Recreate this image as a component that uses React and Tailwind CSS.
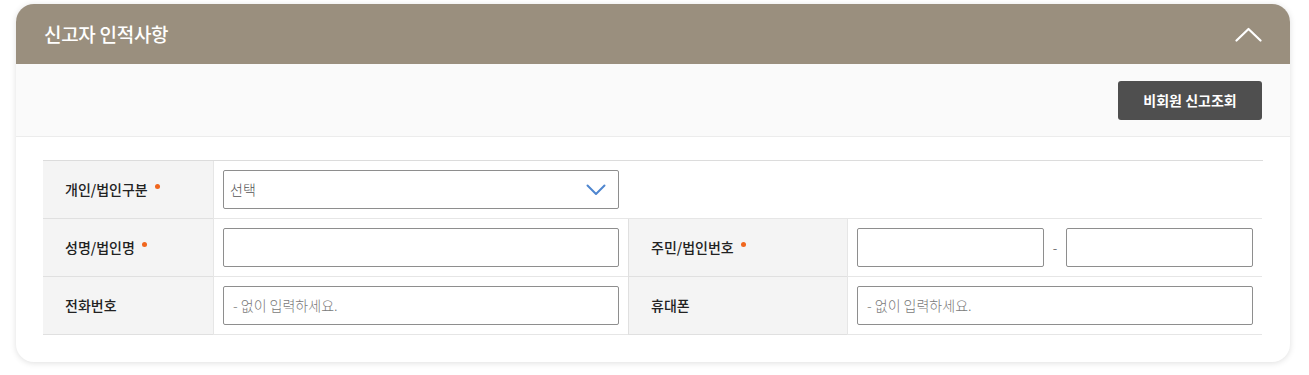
import React from "react";

const font = { fontFamily: '"Noto Sans CJK KR", "Noto Sans", sans-serif' };

function Dot() {
  return <span className="inline-block w-[5px] h-[5px] rounded-full bg-[#f0661e] ml-[7px] relative top-[-3px]"></span>;
}

function Label({ children, req, first }) {
  return (
    <div className={"bg-[#f4f4f4] flex items-center pl-[22px] text-[14px] font-medium text-[#222] border-b border-[#e0e0e0] " + (first ? "" : "border-l")}>
      <span>{children}</span>
      {req && <Dot />}
    </div>
  );
}

function Input({ placeholder, className = "" }) {
  return (
    <div className={"h-[39px] border border-[#8e8e8e] rounded-[2px] bg-white flex items-center px-[9px] text-[14px] font-light text-[#7a7a7a] " + className}>
      {placeholder}
    </div>
  );
}

export default function App() {
  return (
    <div className="bg-white w-[1309px] h-[375px] pt-[4px] px-[16px]" style={font}>
      <div className="w-[1274px] h-[358px] rounded-[18px] overflow-hidden bg-white shadow-[0_1px_6px_rgba(0,0,0,0.13)] flex flex-col">
        <div className="h-[60px] bg-[#9a8f7e] flex items-center justify-between pl-[28px] pr-[28px]">
          <span className="text-white text-[19px] font-medium tracking-[-0.3px]">신고자 인적사항</span>
          <svg width="27" height="15" viewBox="0 0 27 15" fill="none">
            <path d="M1.5 13.5 L13.5 2 L25.5 13.5" stroke="white" strokeWidth="2.2" strokeLinecap="round" strokeLinejoin="round" />
          </svg>
        </div>
        <div className="h-[73px] bg-[#fafafa] border-b border-[#ececec] flex items-start justify-end pr-[28px] pt-[17px]">
          <button className="w-[144px] h-[39px] bg-[#4f4f4f] text-white text-[14px] font-bold rounded-[3px]">비회원 신고조회</button>
        </div>
        <div className="px-[27px] pt-[23px]">
          <div className="border-t border-[#dcdcdc] grid grid-cols-[170px_415px_219px_415px] grid-rows-[58px_58px_58px]">
            <Label req first>개인/법인구분</Label>
            <div className="col-span-3 flex items-center pl-[9px] border-l border-b border-[#e6e6e6]">
              <div className="w-[396px] h-[39px] border border-[#8e8e8e] rounded-[2px] bg-white flex items-center justify-between pl-[6px] pr-[12px] text-[14px] font-light text-[#555]">
                <span>선택</span>
                <svg width="20" height="12" viewBox="0 0 20 12" fill="none">
                  <path d="M1.5 1.5 L10 10 L18.5 1.5" stroke="#4f86cf" strokeWidth="2" strokeLinecap="round" strokeLinejoin="round" />
                </svg>
              </div>
            </div>

            <Label req first>성명/법인명</Label>
            <div className="flex items-center pl-[9px] border-l border-b border-[#e6e6e6]">
              <Input className="w-[396px]" />
            </div>
            <Label req>주민/법인번호</Label>
            <div className="flex items-center pl-[9px] border-l border-b border-[#e6e6e6]">
              <Input className="w-[187px]" />
              <span className="w-[22px] text-center text-[#777] text-[13px]">-</span>
              <Input className="w-[187px]" />
            </div>

            <Label first>전화번호</Label>
            <div className="flex items-center pl-[9px] border-l border-b border-[#e6e6e6]">
              <Input className="w-[396px]" placeholder="- 없이 입력하세요." />
            </div>
            <Label>휴대폰</Label>
            <div className="flex items-center pl-[9px] border-l border-b border-[#e6e6e6]">
              <Input className="w-[396px]" placeholder="- 없이 입력하세요." />
            </div>
          </div>
        </div>
      </div>
    </div>
  );
}
